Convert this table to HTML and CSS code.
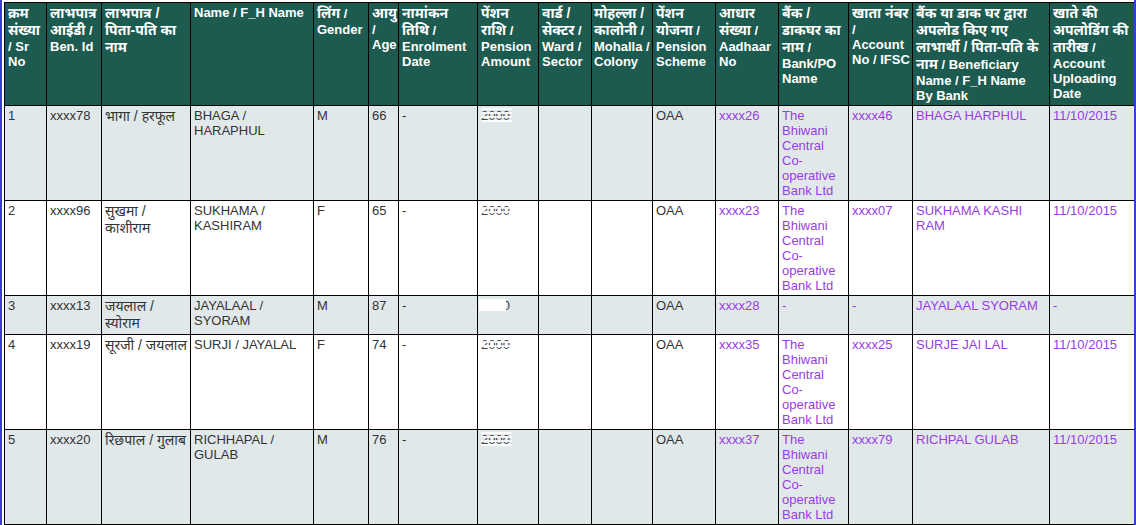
FILE: index.html
```html
<!DOCTYPE html>
<html lang="hi">
<head>
<meta charset="utf-8">
<title>लाभार्थी सूची</title>
<link rel="stylesheet" href="styles.css">
</head>
<body>
<div class="frame">
<table class="grid">
<colgroup>
<col class="w1"><col class="w2"><col class="w3"><col class="w4"><col class="w5"><col class="w6"><col class="w7"><col class="w8"><col class="w9"><col class="w10"><col class="w11"><col class="w12"><col class="w13"><col class="w14"><col class="w15"><col class="w16">
</colgroup>
<thead>
<tr>
<th><span class="dv">क्रम संख्या</span> / Sr No</th>
<th><span class="dv">लाभपात्र आईडी</span> / Ben. Id</th>
<th><span class="dv">लाभपात्र / पिता-पति का नाम</span></th>
<th>Name / F_H Name</th>
<th><span class="dv">लिंग</span> / Gender</th>
<th><span class="dv">आयु</span> / Age</th>
<th><span class="dv">नामांकन तिथि</span> / Enrolment Date</th>
<th><span class="dv">पेंशन राशि</span> / Pension Amount</th>
<th><span class="dv">वार्ड / सेक्टर</span> / Ward / Sector</th>
<th class="roomy"><span class="dv">मोहल्ला / कालोनी</span> / Mohalla / Colony</th>
<th><span class="dv">पेंशन योजना</span> / Pension Scheme</th>
<th><span class="dv">आधार संख्या</span> / Aadhaar No</th>
<th><span class="dv">बैंक / डाकघर का नाम</span> / Bank/PO Name</th>
<th><span class="dv">खाता नंबर</span> / Account No / IFSC</th>
<th class="narrow"><span class="dv">बैंक या डाक घर द्वारा अपलोड किए गए लाभार्थी / पिता-पति के नाम</span> / Beneficiary Name / F_H Name By Bank</th>
<th><span class="dv">खाते की अपलोडिंग की तारीख</span> / Account Uploading Date</th>
</tr>
</thead>
<tbody>
<tr class="alt">
<td>1</td><td>xxxx78</td><td><span class="dv">भागा / हरफूल</span></td><td>BHAGA / HARAPHUL</td><td>M</td><td>66</td><td>-</td><td><span class="amt">2000</span></td><td></td><td></td><td>OAA</td>
<td class="pu">xxxx26</td><td class="pu">The Bhiwani Central Co-operative Bank Ltd</td><td class="pu">xxxx46</td><td class="pu">BHAGA HARPHUL</td><td class="pu">11/10/2015</td>
</tr>
<tr>
<td>2</td><td>xxxx96</td><td><span class="dv">सुखमा / काशीराम</span></td><td>SUKHAMA / KASHIRAM</td><td>F</td><td>65</td><td>-</td><td><span class="amt">2000</span></td><td></td><td></td><td>OAA</td>
<td class="pu">xxxx23</td><td class="pu">The Bhiwani Central Co-operative Bank Ltd</td><td class="pu">xxxx07</td><td class="pu">SUKHAMA KASHI RAM</td><td class="pu">11/10/2015</td>
</tr>
<tr class="alt">
<td>3</td><td>xxxx13</td><td><span class="dv">जयलाल / स्योराम</span></td><td>JAYALAAL / SYORAM</td><td>M</td><td>87</td><td>-</td><td><span class="amt hidden">2000</span></td><td></td><td></td><td>OAA</td>
<td class="pu">xxxx28</td><td class="pu">-</td><td class="pu">-</td><td class="pu">JAYALAAL SYORAM</td><td class="pu">-</td>
</tr>
<tr>
<td>4</td><td>xxxx19</td><td><span class="dv">सूरजी / जयलाल</span></td><td>SURJI / JAYALAL</td><td>F</td><td>74</td><td>-</td><td><span class="amt">2000</span></td><td></td><td></td><td>OAA</td>
<td class="pu">xxxx35</td><td class="pu">The Bhiwani Central Co-operative Bank Ltd</td><td class="pu">xxxx25</td><td class="pu">SURJE JAI LAL</td><td class="pu">11/10/2015</td>
</tr>
<tr class="alt">
<td>5</td><td>xxxx20</td><td><span class="dv">रिछपाल / गुलाब</span></td><td>RICHHAPAL / GULAB</td><td>M</td><td>76</td><td>-</td><td><span class="amt">2000</span></td><td></td><td></td><td>OAA</td>
<td class="pu">xxxx37</td><td class="pu">The Bhiwani Central Co-operative Bank Ltd</td><td class="pu">xxxx79</td><td class="pu">RICHPAL GULAB</td><td class="pu">11/10/2015</td>
</tr>
</tbody>
</table>
</div>
</body>
</html>
```

FILE: styles.css
```css
html, body {
  margin: 0;
  padding: 0;
  background: #ffffff;
}

.frame {
  border-left: 2px solid #3b3bd6;
  border-right: 2px solid #3b3bd6;
  padding: 2px 0 0 2px;
  height: 525px;
  box-sizing: border-box;
  overflow: hidden;
}

.grid {
  table-layout: fixed;
  border-collapse: collapse;
  width: 1130px;
  font-family: "Liberation Sans", Arial, "Noto Sans Devanagari", "Noto Sans", sans-serif;
  font-size: 13px;
  line-height: 15px;
  color: #333333;
}

.grid th,
.grid td {
  border: 1px solid #000000;
  padding: 2px 2px 2px 3px;
  text-align: left;
  vertical-align: top;
}

.grid th {
  background: #1d5b50;
  color: #ffffff;
  font-weight: bold;
}

.grid th.narrow {
  padding-right: 6px;
}

.grid th.roomy {
  padding-left: 2px;
  padding-right: 0;
}

.dv {
  font-size: 14px;
  line-height: 17px;
}

.grid tbody tr {
  background: #ffffff;
}

.grid tbody tr.alt {
  background: #e1e8ea;
}

.grid td.pu {
  color: #9a3ce6;
}

.amt {
  position: relative;
  display: inline-block;
  color: #444;
}

.amt::after {
  content: "";
  position: absolute;
  left: 0;
  right: -2px;
  top: 0;
  bottom: 0;
  background: repeating-linear-gradient(to bottom, rgba(255,255,255,0.85) 0 2px, transparent 2px 4px);
}

.amt.hidden::after {
  background: #ffffff;
  right: 4px;
  left: -2px;
  top: 1px;
  bottom: 2px;
}

.w1 { width: 42px; }
.w2 { width: 55px; }
.w3 { width: 89px; }
.w4 { width: 123px; }
.w5 { width: 55px; }
.w6 { width: 30px; }
.w7 { width: 79px; }
.w8 { width: 61px; }
.w9 { width: 53px; }
.w10 { width: 61px; }
.w11 { width: 63px; }
.w12 { width: 63px; }
.w13 { width: 70px; }
.w14 { width: 64px; }
.w15 { width: 137px; }
.w16 { width: 85px; }
```
